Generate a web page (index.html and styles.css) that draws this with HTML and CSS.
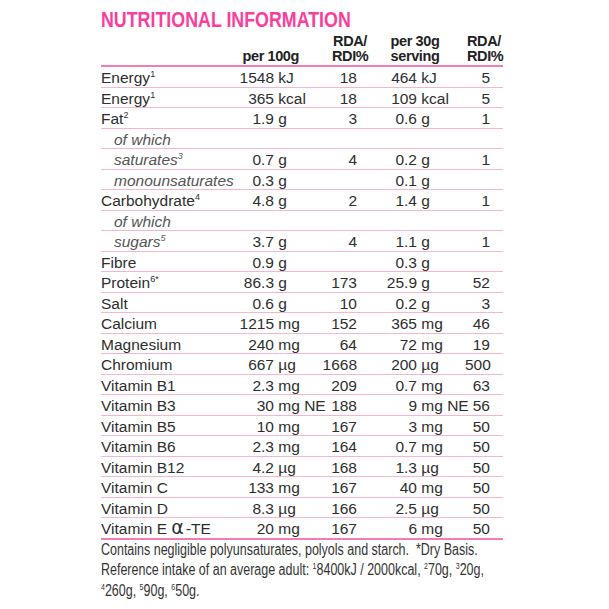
FILE: index.html
```html
<!DOCTYPE html>
<html lang="en">
<head>
<meta charset="utf-8">
<title>Nutritional Information</title>
<link rel="stylesheet" href="styles.css">
</head>
<body>
<div class="panel">
  <h1 class="title"><span class="title-text">NUTRITIONAL INFORMATION</span></h1>

  <div class="head">
    <div></div>
    <div class="h-per100">per 100g</div>
    <div></div>
    <div class="h-center">RDA/<br>RDI%</div>
    <div></div>
    <div class="h-center">per 30g<br>serving</div>
    <div></div>
    <div class="h-center">RDA/<br>RDI%</div>
    <div></div>
  </div>

  <div class="table">
    <div class="row"><div class="name">Energy<sup class="sup">1</sup></div><div class="num">1548</div><div class="unit">kJ</div><div class="rda">18</div><div class="num">464</div><div class="unit">kJ</div><div class="rda">5</div></div>
    <div class="row"><div class="name">Energy<sup class="sup">1</sup></div><div class="num">365</div><div class="unit">kcal</div><div class="rda">18</div><div class="num">109</div><div class="unit">kcal</div><div class="rda">5</div></div>
    <div class="row"><div class="name">Fat<sup class="sup">2</sup></div><div class="num">1.9</div><div class="unit">g</div><div class="rda">3</div><div class="num">0.6</div><div class="unit">g</div><div class="rda">1</div></div>
    <div class="row"><div class="name sub">of which</div><div class="num"></div><div class="unit"></div><div class="rda"></div><div class="num"></div><div class="unit"></div><div class="rda"></div></div>
    <div class="row"><div class="name sub">saturates<sup class="sup">3</sup></div><div class="num">0.7</div><div class="unit">g</div><div class="rda">4</div><div class="num">0.2</div><div class="unit">g</div><div class="rda">1</div></div>
    <div class="row"><div class="name sub">monounsaturates</div><div class="num">0.3</div><div class="unit">g</div><div class="rda"></div><div class="num">0.1</div><div class="unit">g</div><div class="rda"></div></div>
    <div class="row"><div class="name">Carbohydrate<sup class="sup">4</sup></div><div class="num">4.8</div><div class="unit">g</div><div class="rda">2</div><div class="num">1.4</div><div class="unit">g</div><div class="rda">1</div></div>
    <div class="row"><div class="name sub">of which</div><div class="num"></div><div class="unit"></div><div class="rda"></div><div class="num"></div><div class="unit"></div><div class="rda"></div></div>
    <div class="row"><div class="name sub">sugars<sup class="sup">5</sup></div><div class="num">3.7</div><div class="unit">g</div><div class="rda">4</div><div class="num">1.1</div><div class="unit">g</div><div class="rda">1</div></div>
    <div class="row"><div class="name">Fibre</div><div class="num">0.9</div><div class="unit">g</div><div class="rda"></div><div class="num">0.3</div><div class="unit">g</div><div class="rda"></div></div>
    <div class="row"><div class="name">Protein<sup class="sup">6*</sup></div><div class="num">86.3</div><div class="unit">g</div><div class="rda">173</div><div class="num">25.9</div><div class="unit">g</div><div class="rda">52</div></div>
    <div class="row"><div class="name">Salt</div><div class="num">0.6</div><div class="unit">g</div><div class="rda">10</div><div class="num">0.2</div><div class="unit">g</div><div class="rda">3</div></div>
    <div class="row"><div class="name">Calcium</div><div class="num">1215</div><div class="unit">mg</div><div class="rda">152</div><div class="num">365</div><div class="unit">mg</div><div class="rda">46</div></div>
    <div class="row"><div class="name">Magnesium</div><div class="num">240</div><div class="unit">mg</div><div class="rda">64</div><div class="num">72</div><div class="unit">mg</div><div class="rda">19</div></div>
    <div class="row"><div class="name">Chromium</div><div class="num">667</div><div class="unit">µg</div><div class="rda">1668</div><div class="num">200</div><div class="unit">µg</div><div class="rda">500</div></div>
    <div class="row"><div class="name">Vitamin B1</div><div class="num">2.3</div><div class="unit">mg</div><div class="rda">209</div><div class="num">0.7</div><div class="unit">mg</div><div class="rda">63</div></div>
    <div class="row"><div class="name">Vitamin B3</div><div class="num">30</div><div class="unit">mg NE</div><div class="rda">188</div><div class="num">9</div><div class="unit">mg NE</div><div class="rda">56</div></div>
    <div class="row"><div class="name">Vitamin B5</div><div class="num">10</div><div class="unit">mg</div><div class="rda">167</div><div class="num">3</div><div class="unit">mg</div><div class="rda">50</div></div>
    <div class="row"><div class="name">Vitamin B6</div><div class="num">2.3</div><div class="unit">mg</div><div class="rda">164</div><div class="num">0.7</div><div class="unit">mg</div><div class="rda">50</div></div>
    <div class="row"><div class="name">Vitamin B12</div><div class="num">4.2</div><div class="unit">µg</div><div class="rda">168</div><div class="num">1.3</div><div class="unit">µg</div><div class="rda">50</div></div>
    <div class="row"><div class="name">Vitamin C</div><div class="num">133</div><div class="unit">mg</div><div class="rda">167</div><div class="num">40</div><div class="unit">mg</div><div class="rda">50</div></div>
    <div class="row"><div class="name">Vitamin D</div><div class="num">8.3</div><div class="unit">µg</div><div class="rda">166</div><div class="num">2.5</div><div class="unit">µg</div><div class="rda">50</div></div>
    <div class="row last"><div class="name">Vitamin E <span class="alpha">α</span>-TE</div><div class="num">20</div><div class="unit">mg</div><div class="rda">167</div><div class="num">6</div><div class="unit">mg</div><div class="rda">50</div></div>
  </div>

  <div class="notes">
    <div class="notes-inner">
      Contains negligible polyunsaturates, polyols and starch.&nbsp; *Dry Basis.<br>
      Reference intake of an average adult: <sup class="fsup">1</sup>8400kJ / 2000kcal, <sup class="fsup">2</sup>70g, <sup class="fsup">3</sup>20g,<br>
      <sup class="fsup">4</sup>260g, <sup class="fsup">5</sup>90g, <sup class="fsup">6</sup>50g.
    </div>
  </div>
</div>
</body>
</html>
```

FILE: styles.css
```css
html, body {
  margin: 0;
  padding: 0;
  background: #ffffff;
}

body {
  font-family: "Liberation Sans", Arial, Helvetica, sans-serif;
  color: #2e2e2e;
}

.panel {
  width: 402px;
  padding: 9px 0 0 101px;
}

.title {
  margin: 0;
  font-size: 22px;
  line-height: 22px;
  font-weight: bold;
  color: #f93e9c;
  white-space: nowrap;
}

.title-text {
  display: inline-block;
  transform: scaleX(0.81);
  transform-origin: left center;
}

.head {
  display: grid;
  grid-template-columns: 131px 67px 33px 36px 22px 50px 27px 33px 3px;
  align-items: end;
  margin-top: 3px;
  padding-bottom: 1px;
  border-bottom: 2px solid #f27cb4;
  font-size: 14.5px;
  line-height: 15px;
  font-weight: bold;
  letter-spacing: -0.4px;
  color: #222;
  white-space: nowrap;
}

.h-per100 {
  text-align: right;
}

.h-center {
  text-align: center;
}

.row {
  display: grid;
  grid-template-columns: 137px 36px 47px 36px 60px 48px 25px 13px;
  padding-top: 2px;
  font-size: 15.5px;
  line-height: 17.5px;
  border-bottom: 1px solid #f6b6d3;
  white-space: nowrap;
}

.row.last {
  border-bottom: 2px solid #f27cb4;
}

.name.sub {
  padding-left: 13px;
  font-style: italic;
  color: #555;
}

.num {
  text-align: right;
}

.unit {
  padding-left: 4.3px;
}

.rda {
  text-align: right;
}

.sup {
  font-size: 9px;
  line-height: 0;
  vertical-align: 6px;
}

.alpha {
  font-family: "DejaVu Sans", sans-serif;
  font-size: 19px;
  line-height: 0;
  margin-right: 2px;
}

.notes {
  font-size: 16px;
  line-height: 20.5px;
  color: #333;
}

.notes-inner {
  width: 520px;
  white-space: nowrap;
  transform: scaleX(0.78);
  transform-origin: left top;
}

.fsup {
  font-size: 9px;
  line-height: 0;
  vertical-align: 6px;
}
```
